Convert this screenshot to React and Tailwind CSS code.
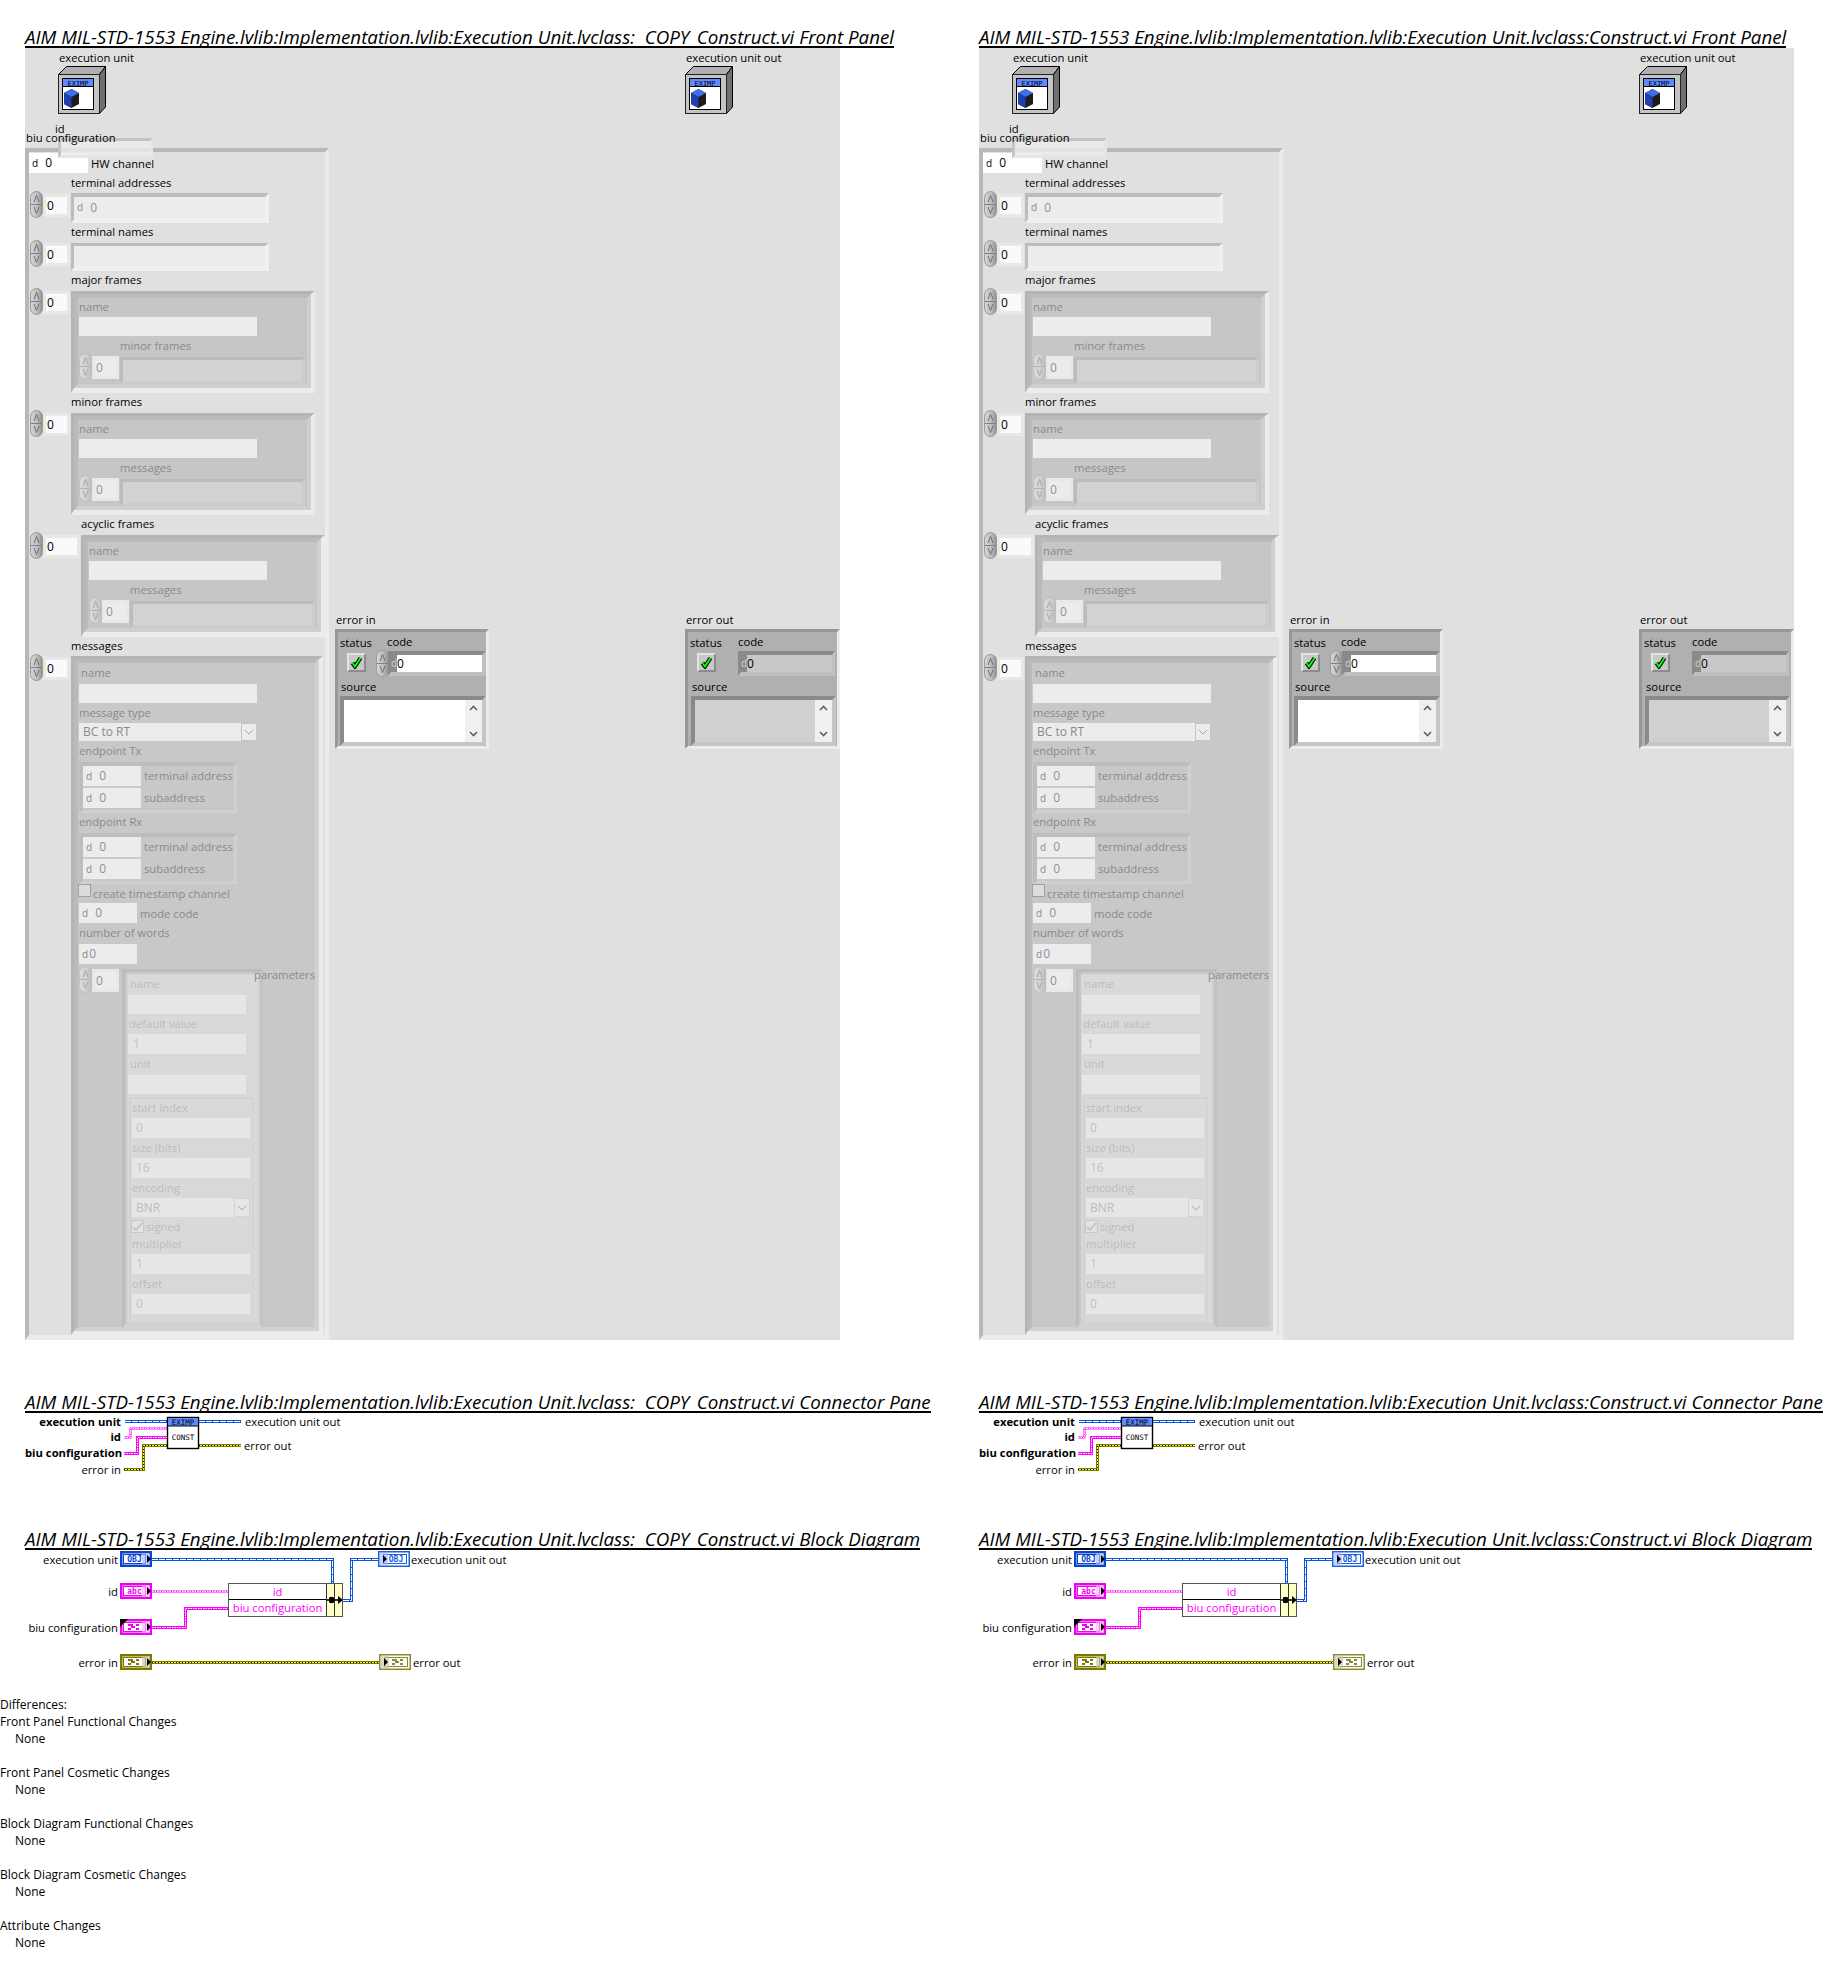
import React from "react";

const L1 = "text-[#8a8a8a]";
const L2 = "text-[#bcbcbc]";
const N1 = "text-[#8494a8]";
const N2 = "text-[#c2c2c2]";

function L({ className = "", children }) {
  return <div className={`h-[16px] leading-[16px] text-[11.25px] whitespace-nowrap ${className}`}>{children}</div>;
}

function Spinner({ dim, className = "" }) {
  const id = dim ? "spd" : "spn";
  return (
    <svg width="13" height="27" viewBox="0 0 13 27" className={`shrink-0 ${className}`}>
      <defs>
        <linearGradient id={id} x1="0" x2="1" y1="0" y2="0">
          <stop offset="0" stopColor={dim ? "#dcdcdc" : "#d8d8d8"} />
          <stop offset="0.6" stopColor={dim ? "#cfcfcf" : "#bababa"} />
          <stop offset="1" stopColor={dim ? "#bcbcbc" : "#8e8e8e"} />
        </linearGradient>
      </defs>
      <rect x="0.5" y="0.5" width="12" height="26" rx="6" fill={`url(#${id})`} stroke={dim ? "#bdbdbd" : "#9a9a9a"} />
      <line x1="1" x2="12" y1="13.5" y2="13.5" stroke={dim ? "#b4b4b4" : "#808080"} />
      <path d="M4 11 L6.5 4.5 L9 11 M4 16 L6.5 22.5 L9 16" fill="none" stroke={dim ? "#a8a8a8" : "#707070"} />
    </svg>
  );
}

function Index({ dim, wide }) {
  return (
    <div className={`shrink-0 ml-0 h-[23px] border-[3px] border-[#e8e8e8] text-[12px] leading-[17px] pl-[1px] ${wide ? "w-[37px]" : dim ? "w-[27px] bg-[#ececec] text-[#8494a8] border-[#d2d2d2]" : "w-[27px]"} ${dim ? "" : "bg-[#fafafa] text-black"}`}>
      0
    </div>
  );
}

function Num({ className = "", children = "0", tight, color = N1, dcolor = "text-[#8a8a8a]" }) {
  return (
    <div className={`flex shrink-0 items-center ${className}`}>
      <span className={`text-[10px] pl-[3px] ${dcolor}`}>d</span>
      <span className={`text-[12px] ${tight ? "pl-[1px]" : "pl-[7px]"} ${color}`}>{children}</span>
    </div>
  );
}

function Enum({ text, className = "", color, line }) {
  return (
    <div className={`flex items-center justify-between bg-[#ececec] ${className}`}>
      <span className={`text-[12px] pl-[4px] ${color}`}>{text}</span>
      <span className={`w-[16px] h-full border-[1px] flex items-center justify-center ${line}`}>
        <svg width="10" height="6" viewBox="0 0 10 6"><path d="M1 1 L5 5 L9 1" fill="none" stroke="#a8a8a8" /></svg>
      </span>
    </div>
  );
}

function ArrayOfFrames({ sub, wide }) {
  return (
    <div className="flex items-start ml-[1px] h-[105px]">
      <Spinner />
      <div className="mt-[3px]"><Index wide={wide} /></div>
      <div className="ml-[1px] mt-[3px] w-[244px] h-[102px] border-t-[3px] border-l-[3px] border-r-[4px] border-b-[5px] border-t-[#b4b4b4] border-l-[#b4b4b4] border-r-[#ececec] border-b-[#ececec]">
        <div className="h-full border-t-[4px] border-l-[4px] border-r-[4px] border-b-[4px] border-t-[#bababa] border-l-[#bababa] border-r-[#cfcfcf] border-b-[#cfcfcf] bg-[#c6c6c6]">
          <L className={`mt-[1px] ml-[1px] ${L1}`}>name</L>
          <div className="mt-[2px] ml-[1px] w-[178px] h-[19px] bg-[#ececec]" />
          <L className={`mt-[2px] ml-[42px] ${L1}`}>{sub}</L>
          <div className="flex items-start -mt-[1px] ml-[1px]">
            <Spinner dim />
            <div className="mt-[3px]"><Index dim /></div>
            <div className="ml-[1px] mt-[4px] w-[185px] h-[27px] border-[3px] border-t-[#bcbcbc] border-l-[#bcbcbc] border-r-[#cccccc] border-b-[#cccccc] bg-[#d2d2d2]" />
          </div>
        </div>
      </div>
    </div>
  );
}

function Endpoint() {
  return (
    <div className="mt-[3px] ml-[1px] w-[158px] h-[51px] border-t-[4px] border-l-[4px] border-r-[3px] border-b-[3px] border-t-[#bdbdbd] border-l-[#bdbdbd] border-r-[#d0d0d0] border-b-[#d0d0d0]">
      <div className="flex">
        <Num className="w-[58px] h-[20px] bg-[#ececec]" />
        <L className={`ml-[3px] mt-[2px] ${L1}`}>terminal address</L>
      </div>
      <div className="flex mt-[2px]">
        <Num className="w-[58px] h-[20px] bg-[#ececec]" />
        <L className={`ml-[3px] mt-[2px] ${L1}`}>subaddress</L>
      </div>
    </div>
  );
}

function Biu() {
  return (
    <div className="absolute left-0 top-[100px] w-[304px] h-[1192px] border-t-[4px] border-l-[4px] border-r-[4px] border-b-[5px] border-t-[#b8b8b8] border-l-[#b8b8b8] border-r-[#ececec] border-b-[#ececec] bg-[#e0e0e0]">
      <div className="flex mt-[1px]">
        <Num className="w-[59px] h-[20px] bg-white" color="text-black" dcolor="text-black">0</Num>
        <L className="ml-[3px] mt-[3px]">HW channel</L>
      </div>
      <L className="mt-[2px] ml-[42px]">terminal addresses</L>
      <div className="flex items-start ml-[1px] h-[32px]">
        <Spinner />
        <div className="mt-[3px]"><Index /></div>
        <div className="ml-[1px] mt-[2px] w-[198px] h-[30px] border-t-[4px] border-l-[3px] border-r-[4px] border-b-[4px] border-t-[#bcbcbc] border-l-[#bcbcbc] border-r-[#f0f0f0] border-b-[#f0f0f0] bg-[#ececec]">
          <Num className="h-[21px]">0</Num>
        </div>
      </div>
      <L className="mt-[1px] ml-[42px]">terminal names</L>
      <div className="flex items-start ml-[1px] h-[31px]">
        <Spinner />
        <div className="mt-[3px]"><Index /></div>
        <div className="ml-[1px] mt-[3px] w-[198px] h-[28px] border-t-[3px] border-l-[3px] border-r-[4px] border-b-[4px] border-t-[#bcbcbc] border-l-[#bcbcbc] border-r-[#f0f0f0] border-b-[#f0f0f0] bg-[#ececec]" />
      </div>
      <L className="mt-[1px] ml-[42px]">major frames</L>
      <ArrayOfFrames sub="minor frames" />
      <L className="mt-[1px] ml-[42px]">minor frames</L>
      <ArrayOfFrames sub="messages" />
      <L className="mt-[1px] ml-[52px]">acyclic frames</L>
      <ArrayOfFrames sub="messages" wide />
      <L className="mt-[1px] ml-[42px]">messages</L>
      <div className="flex items-start ml-[1px]">
        <Spinner />
        <div className="mt-[3px]"><Index /></div>
        <div className="ml-[1px] mt-[2px] w-[252px] h-[679px] border-t-[3px] border-l-[3px] border-r-[4px] border-b-[4px] border-t-[#b4b4b4] border-l-[#b4b4b4] border-r-[#ececec] border-b-[#ececec]">
          <div className="h-full border-[4px] border-t-[#bababa] border-l-[#bababa] border-r-[#d2d2d2] border-b-[#d2d2d2] bg-[#c8c8c8]">
            <L className={`mt-[2px] ml-[3px] ${L1}`}>name</L>
            <div className="mt-[3px] ml-[1px] w-[178px] h-[19px] bg-[#ececec]" />
            <L className={`mt-[2px] ml-[1px] ${L1}`}>message type</L>
            <Enum text="BC to RT" color={L1} line="border-[#c4c4c4]" className="mt-[2px] ml-[1px] w-[178px] h-[18px]" />
            <L className={`mt-[2px] ml-[1px] ${L1}`}>endpoint Tx</L>
            <Endpoint />
            <L className={`mt-[1px] ml-[1px] ${L1}`}>endpoint Rx</L>
            <Endpoint />
            <div className="flex h-[13px]">
              <div className="w-[13px] h-[13px] border-[1px] border-[#a0a0a0] bg-[#dcdcdc]" />
              <L className={`ml-[2px] mt-[2px] ${L1}`}>create timestamp channel</L>
            </div>
            <div className="flex mt-[6px] ml-[1px]">
              <Num className="w-[58px] h-[20px] bg-[#ececec]" />
              <L className={`ml-[3px] mt-[3px] ${L1}`}>mode code</L>
            </div>
            <L className={`mt-[2px] ml-[1px] ${L1}`}>number of words</L>
            <Num tight className="mt-[3px] ml-[1px] w-[58px] h-[20px] bg-[#ececec]" />
            <div className="relative flex items-start mt-[2px] ml-[1px]">
              <Spinner dim />
              <div className="mt-[3px]"><Index dim /></div>
              <div className="ml-[3px] mt-[3px] w-[141px] h-[359px] border-t-[3px] border-l-[3px] border-r-[3px] border-b-[4px] border-t-[#bcbcbc] border-l-[#bcbcbc] border-r-[#c2c2c2] border-b-[#d2d2d2]">
                <div className="h-full border-[2px] border-t-[#c6c6c6] border-l-[#c6c6c6] border-r-[#d0d0d0] border-b-[#d0d0d0] bg-[#d9d9d9]">
                  <L className={`mt-[2px] ml-[3px] ${L2}`}>name</L>
                  <div className="mt-[3px] ml-[1px] w-[118px] h-[19px] bg-[#e6e6e6]" />
                  <L className={`mt-[2px] ml-[2px] ${L2}`}>default value</L>
                  <div className={`mt-[2px] ml-[1px] w-[118px] h-[20px] bg-[#e6e6e6] text-[12px] leading-[20px] pl-[5px] ${N2}`}>1</div>
                  <L className={`mt-[2px] ml-[3px] ${L2}`}>unit</L>
                  <div className="mt-[3px] ml-[1px] w-[118px] h-[19px] bg-[#e6e6e6]" />
                  <div className="mt-[3px] ml-[2px] w-[125px] h-[226px] border-[2px] border-t-[#d2d2d2] border-l-[#d2d2d2] border-r-[#d4d4d4] border-b-[#d4d4d4]">
                    <L className={`mt-[1px] ml-[1px] ${L2}`}>start index</L>
                    <div className={`mt-[2px] ml-[1px] w-[118px] h-[20px] bg-[#e6e6e6] text-[12px] leading-[20px] pl-[4px] ${N2}`}>0</div>
                    <L className={`mt-[2px] ml-[1px] ${L2}`}>size (bits)</L>
                    <div className={`mt-[2px] ml-[1px] w-[118px] h-[20px] bg-[#e6e6e6] text-[12px] leading-[20px] pl-[4px] ${N2}`}>16</div>
                    <L className={`mt-[2px] ml-[1px] ${L2}`}>encoding</L>
                    <Enum text="BNR" color={L2} line="border-[#d4d4d4]" className="mt-[2px] ml-[1px] w-[118px] h-[19px] !bg-[#e6e6e6]" />
                    <div className="flex h-[13px] mt-[3px]">
                      <div className="w-[13px] h-[13px] border-[1px] border-[#c8c8c8] bg-[#e2e2e2] flex items-center justify-center">
                        <svg width="11" height="10" viewBox="0 0 11 10"><path d="M1 5 L4 8 L10 1" fill="none" stroke="#bdbdbd" strokeWidth="1.3" /></svg>
                      </div>
                      <L className={`ml-[2px] -mt-[1px] ${L2}`}>signed</L>
                    </div>
                    <L className={`mt-[3px] ml-[1px] ${L2}`}>multiplier</L>
                    <div className={`mt-[2px] ml-[1px] w-[118px] h-[20px] bg-[#e6e6e6] text-[12px] leading-[20px] pl-[4px] ${N2}`}>1</div>
                    <L className={`mt-[2px] ml-[1px] ${L2}`}>offset</L>
                    <div className={`mt-[2px] ml-[1px] w-[118px] h-[20px] bg-[#e6e6e6] text-[12px] leading-[20px] pl-[4px] ${N2}`}>0</div>
                  </div>
                </div>
              </div>
              <L className={`absolute left-[175px] top-[1px] ${L1}`}>parameters</L>
            </div>
          </div>
        </div>
      </div>
    </div>
  );
}

function ClassIcon({ className }) {
  return (
    <svg width="48" height="48" viewBox="0 0 48 48" className={className}>
      <path d="M0.5 8.5 L8.5 0.5 H47.5 L41.5 8.5 Z" fill="#b0b0b0" stroke="#000" />
      <path d="M41.5 8.5 L47.5 0.5 V41 L41.5 47.5 Z" fill="#707070" stroke="#000" />
      <rect x="0.5" y="8.5" width="41" height="39" fill="#c4c4c4" stroke="#222" />
      <rect x="4.5" y="12.5" width="31" height="31" fill="#fff" stroke="#000" />
      <rect x="5" y="13" width="30" height="7" fill="#5f8bff" />
      <line x1="4.5" x2="35.5" y1="20.5" y2="20.5" stroke="#000" />
      <text x="20" y="19.6" textAnchor="middle" fontSize="7" fontFamily="DejaVu Sans Mono" fill="#000">EXIMP</text>
      <path d="M6 27 L13.5 23 L21 27 V38 L13.5 42 L6 38 Z" fill="#1c1c1c" />
      <path d="M6 27 L13.5 23 L21 27 L13.5 31 Z" fill="#3f6fe8" />
      <path d="M6 27 L13.5 31 V42 L6 38 Z" fill="#1f3fb0" />
    </svg>
  );
}

function Check() {
  return (
    <div className="w-[19px] h-[19px] border-[2px] border-t-[#e4e4e4] border-l-[#e4e4e4] border-r-[#8c8c8c] border-b-[#8c8c8c] bg-[#c8c8c8] flex items-center justify-center">
      <svg width="13" height="13" viewBox="0 0 13 13">
        <path d="M2.5 7 L5 10.5 L10.5 2" fill="none" stroke="#000" strokeWidth="4" />
        <path d="M2.5 7 L5 10.5 L10.5 2" fill="none" stroke="#00ff00" strokeWidth="2" />
      </svg>
    </div>
  );
}

function Chevrons() {
  return (
    <div className="w-[17px] h-full bg-[#f0f0f0] flex flex-col justify-between items-center py-[5px]">
      <svg width="9" height="6" viewBox="0 0 9 6"><path d="M1 5 L4.5 1.5 L8 5" fill="none" stroke="#606060" strokeWidth="1.6" /></svg>
      <svg width="9" height="6" viewBox="0 0 9 6"><path d="M1 1 L4.5 4.5 L8 1" fill="none" stroke="#606060" strokeWidth="1.6" /></svg>
    </div>
  );
}

function ErrorIn() {
  return (
    <div className="absolute left-[310px] top-[581px] w-[154px] h-[120px] border-t-[3px] border-l-[3px] border-r-[3px] border-b-[3px] border-t-[#989898] border-l-[#989898] border-r-[#ececec] border-b-[#ececec] bg-[#b0b0b0]">
      <div className="flex mt-[2px] h-[16px]">
        <L className="ml-[2px] mt-[1px]">status</L>
        <L className="absolute left-[49px] top-[2px]">code</L>
      </div>
      <div className="flex items-start h-[26px]">
        <div className="ml-[9px] mt-[3px]"><Check /></div>
        <Spinner className="ml-[10px]" />
        <div className="flex -ml-[1px] mt-[1px] w-[99px] h-[25px] border-t-[4px] border-l-[3px] border-r-[4px] border-b-[4px] border-t-[#8a8a8a] border-l-[#8a8a8a] border-r-[#c0c0c0] border-b-[#c0c0c0]">
          <span className="w-[6px] bg-[#8a8a8a] text-[10px] leading-[17px] text-[#d0d0d0]">d</span>
          <span className="flex-1 bg-white text-[12px] leading-[17px] text-black">0</span>
        </div>
      </div>
      <L className="mt-[3px] ml-[3px]">source</L>
      <div className="flex mt-[1px] ml-[2px] w-[146px] h-[50px] border-t-[4px] border-l-[4px] border-r-[4px] border-b-[4px] border-t-[#8a8a8a] border-l-[#8a8a8a] border-r-[#c6c6c6] border-b-[#c6c6c6] bg-white">
        <div className="flex-1" />
        <Chevrons />
      </div>
    </div>
  );
}

function ErrorOut() {
  return (
    <div className="absolute left-[660px] top-[581px] w-[155px] h-[120px] border-t-[3px] border-l-[3px] border-r-[3px] border-b-[3px] border-t-[#989898] border-l-[#989898] border-r-[#ececec] border-b-[#ececec] bg-[#b0b0b0]">
      <div className="flex mt-[2px] h-[16px]">
        <L className="ml-[2px] mt-[1px]">status</L>
        <L className="absolute left-[50px] top-[2px]">code</L>
      </div>
      <div className="flex items-start h-[26px]">
        <div className="ml-[9px] mt-[3px]"><Check /></div>
        <div className="flex ml-[22px] mt-[1px] w-[97px] h-[25px] border-t-[4px] border-l-[3px] border-r-[3px] border-b-[4px] border-t-[#8a8a8a] border-l-[#8a8a8a] border-r-[#c0c0c0] border-b-[#c0c0c0]">
          <span className="w-[6px] bg-[#8a8a8a] text-[10px] leading-[17px] text-[#d0d0d0]">d</span>
          <span className="flex-1 bg-[#c8c8c8] text-[12px] leading-[17px] text-black">0</span>
        </div>
      </div>
      <L className="mt-[3px] ml-[4px]">source</L>
      <div className="flex mt-[1px] ml-[3px] w-[145px] h-[50px] border-t-[4px] border-l-[4px] border-r-[4px] border-b-[4px] border-t-[#8a8a8a] border-l-[#8a8a8a] border-r-[#c6c6c6] border-b-[#c6c6c6] bg-[#d0d0d0]">
        <div className="flex-1" />
        <Chevrons />
      </div>
    </div>
  );
}

function Title({ children }) {
  return (
    <div className="h-[22px]">
      <div className="inline-block h-[22px] border-b-[2px] border-black text-[18.75px] leading-[21px] italic whitespace-pre text-black">
        {children}
      </div>
    </div>
  );
}

function FrontPanel() {
  return (
    <div className="relative w-[815px] h-[1292px] bg-[#e0e0e0] overflow-hidden">
      <L className="absolute left-[34px] top-[2px]">execution unit</L>
      <ClassIcon className="absolute left-[33px] top-[18px]" />
      <L className="absolute left-[661px] top-[2px]">execution unit out</L>
      <ClassIcon className="absolute left-[660px] top-[18px]" />
      <Biu />
      <div className="absolute left-[33px] top-[90px] w-[95px] h-[20px] border-t-[3px] border-l-[3px] border-r-[3px] border-b-[3px] border-t-[#c4c4c4] border-l-[#c4c4c4] border-r-[#e6e6e6] border-b-[#e6e6e6] bg-[#ececec]/80" />
      <L className="absolute left-[30px] top-[73px]">id</L>
      <L className="absolute left-[1px] top-[82px]">biu configuration</L>
      <L className="absolute left-[311px] top-[564px]">error in</L>
      <ErrorIn />
      <L className="absolute left-[661px] top-[564px]">error out</L>
      <ErrorOut />
    </div>
  );
}

function Wire({ d, kind, thin }) {
  if (kind === "blue")
    return (
      <g fill="none">
        <path d={d} stroke="#0a55d8" strokeWidth="3" />
        <path d={d} stroke="#fff" strokeWidth="1" strokeDasharray="6 1" />
      </g>
    );
  if (kind === "pink")
    return (
      <g fill="none">
        <path d={d} stroke="#ff00ff" strokeWidth={thin ? 2 : 3} />
        <path d={d} stroke="#fff" strokeWidth="1" strokeDasharray="1.5 1" />
      </g>
    );
  return (
    <g fill="none">
      <path d={d} stroke="#7a7a00" strokeWidth="3" />
      <path d={d} stroke="#ffff20" strokeWidth="1" />
      <path d={d} stroke="#000" strokeWidth="1" strokeDasharray="1 2" />
    </g>
  );
}

function ConnectorPane() {
  return (
    <div className="relative h-[115px]">
      <svg className="absolute left-0 top-0" width="954" height="115" viewBox="25 1413 954 115">
        <Wire kind="blue" d="M125 1421.5 H167 M199 1421.5 H241" />
        <Wire kind="pink" thin d="M124 1437.5 H130.5 V1428.5 H167" />
        <Wire kind="pink" d="M124 1453.5 H137.5 V1437.5 H167" />
        <Wire kind="yellow" d="M124 1469.5 H143.5 V1445.5 H167 M199 1445.5 H241" />
        <rect x="167.5" y="1417.5" width="31" height="31" fill="#fff" stroke="#000" strokeWidth="1.4" />
        <rect x="168" y="1418" width="30" height="8" fill="#5f8bff" />
        <line x1="167.5" x2="198.5" y1="1426" y2="1426" stroke="#000" />
        <text x="183" y="1424.6" textAnchor="middle" fontSize="7.5" fontFamily="DejaVu Sans Mono">EXIMP</text>
        <text x="183" y="1439.6" textAnchor="middle" fontSize="7.5" fontFamily="DejaVu Sans Mono">CONST</text>
      </svg>
      <L className="absolute left-0 top-[1px] w-[96px] text-right font-bold">execution unit</L>
      <L className="absolute left-0 top-[16px] w-[96px] text-right font-bold">id</L>
      <L className="absolute left-0 top-[32px] w-[96px] text-right font-bold">biu configuration</L>
      <L className="absolute left-0 top-[49px] w-[96px] text-right">error in</L>
      <L className="absolute left-[220px] top-[1px]">execution unit out</L>
      <L className="absolute left-[219px] top-[25px]">error out</L>
    </div>
  );
}

function ClusterGlyph({ x, y, c }) {
  return (
    <g fill={c}>
      <rect x={x} y={y} width="5" height="2" />
      <rect x={x + 3} y={y + 2} width="4" height="2" />
      <rect x={x + 8} y={y} width="3" height="2" />
      <rect x={x} y={y + 4} width="3" height="2" />
      <rect x={x + 8} y={y + 4} width="3" height="2" />
    </g>
  );
}

function Term({ x, y, c, shade, out, text, cluster }) {
  const sw = out ? 1.5 : 2.5;
  return (
    <g transform={`translate(${x} ${y})`}>
      <rect x={sw / 2} y={sw / 2} width={32 - sw} height={16 - sw} fill="#fff" stroke={c} strokeWidth={sw} />
      <rect x={out ? 5.5 : 3.5} y="3.5" width={out ? 23 : 22} height="9" fill="#fff" stroke={c} />
      {text && (
        <text x={out ? 18 : 14.5} y="11" textAnchor="middle" fontSize="8" fontWeight="bold" fontFamily="DejaVu Sans Mono" fill={c}>{text}</text>
      )}
      {cluster && <ClusterGlyph x={out ? 13 : 8} y={5} c={c} />}
      {out ? <rect x="2" y="2" width="8" height="12" fill={shade} opacity="0.65" /> : <rect x="22" y="2" width="8" height="12" fill={shade} opacity="0.65" />}
      {out ? <path d="M5 4 L9 8 L5 12 Z" fill="#000" /> : <path d="M27 4 L31 8 L27 12 Z" fill="#000" />}
    </g>
  );
}

function BlockDiagram() {
  return (
    <div className="relative h-[146px]">
      <div className="absolute left-[203px] top-[33px] w-[115px] h-[34px] flex border-[1px] border-[#555] bg-white">
        <div className="w-[98px] flex flex-col text-[#ff00ff] text-[11.25px] text-center leading-[16px]">
          <div className="h-[16px] border-b-[1px] border-black">id</div>
          <div className="h-[16px] whitespace-nowrap">biu configuration</div>
        </div>
        <div className="w-[8px] border-l-[1px] border-[#333] bg-[#ffffc8]" />
        <div className="w-[8px] border-l-[1px] border-[#333] bg-[#ffffc8]" />
      </div>
      <svg className="absolute left-0 top-0" width="954" height="146" viewBox="25 1550 954 146">
        <Wire kind="blue" d="M152 1559.5 H332.5 V1583" />
        <Wire kind="blue" d="M343 1600.5 H351.5 V1559.5 H378" />
        <Wire kind="pink" thin d="M152 1591.5 H228" />
        <Wire kind="pink" d="M152 1627.5 H185.5 V1608.5 H228" />
        <Wire kind="yellow" d="M152 1662.5 H380" />
        <line x1="327" x2="339" y1="1600" y2="1600" stroke="#000" strokeWidth="1.6" />
        <rect x="329" y="1597" width="5" height="6" fill="#000" rx="1" />
        <path d="M338 1596 L343 1600 L338 1604 Z" fill="#000" />
        <Term x={120} y={1551} c="#0a45d0" shade="#a8b8ff" text="OBJ" />
        <Term x={120} y={1583} c="#f000f0" shade="#ffb0ff" text="abc" />
        <Term x={120} y={1619} c="#f000f0" shade="#ffb0ff" cluster />
        <path d="M120 1619 H128 L120 1627 Z" fill="#000" />
        <Term x={120} y={1654} c="#7a7a00" shade="#c8c8a0" cluster />
        <Term x={378} y={1551} c="#1a60e0" shade="#a8b8ff" text="OBJ" out />
        <Term x={379} y={1654} c="#8a8a30" shade="#c8c8a0" cluster out />
      </svg>
      <L className="absolute left-0 top-[2px] w-[93px] text-right">execution unit</L>
      <L className="absolute left-0 top-[34px] w-[93px] text-right">id</L>
      <L className="absolute left-0 top-[70px] w-[93px] text-right">biu configuration</L>
      <L className="absolute left-0 top-[105px] w-[93px] text-right">error in</L>
      <L className="absolute left-[386px] top-[2px]">execution unit out</L>
      <L className="absolute left-[388px] top-[105px]">error out</L>
    </div>
  );
}

function Column({ name }) {
  return (
    <div className="min-w-0">
      <Title>{`AIM MIL-STD-1553 Engine.lvlib:Implementation.lvlib:Execution Unit.lvclass:${name}.vi Front Panel`}</Title>
      <FrontPanel />
      <div className="mt-[51px]">
        <Title>{`AIM MIL-STD-1553 Engine.lvlib:Implementation.lvlib:Execution Unit.lvclass:${name}.vi Connector Pane`}</Title>
      </div>
      <ConnectorPane />
      <Title>{`AIM MIL-STD-1553 Engine.lvlib:Implementation.lvlib:Execution Unit.lvclass:${name}.vi Block Diagram`}</Title>
      <BlockDiagram />
    </div>
  );
}

const CHANGES = [
  "Front Panel Functional Changes",
  "Front Panel Cosmetic Changes",
  "Block Diagram Functional Changes",
  "Block Diagram Cosmetic Changes",
  "Attribute Changes",
];

export default function App() {
  return (
    <div className="w-[1845px] h-[1985px] bg-white overflow-hidden text-black font-['Open_Sans',sans-serif]">
      <div className="pt-[26px] pl-[25px] grid grid-cols-[954px_866px]">
        <Column name="  COPY_Construct" />
        <Column name="Construct" />
      </div>
      <div className="text-[12px] leading-[17px]">
        <div>Differences:</div>
        {CHANGES.map((c) => (
          <div key={c} className="h-[51px]">
            <div>{c}</div>
            <div className="pl-[15px]">None</div>
          </div>
        ))}
      </div>
    </div>
  );
}
